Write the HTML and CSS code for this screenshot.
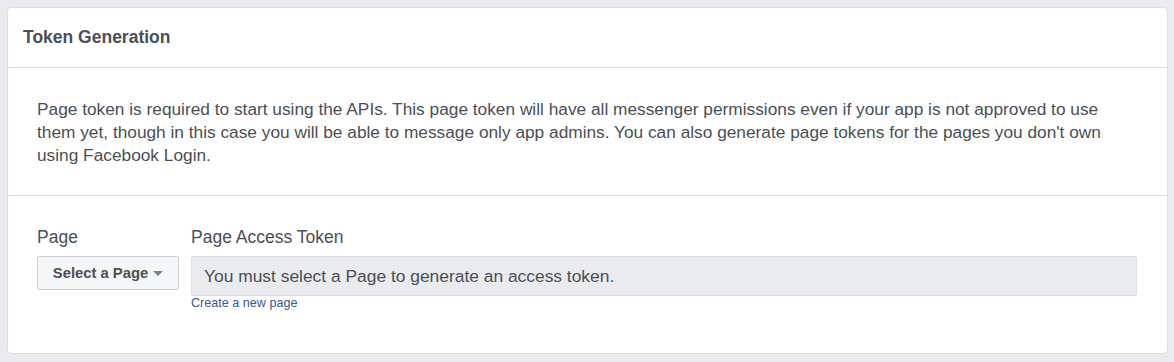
FILE: index.html
```html
<!DOCTYPE html>
<html lang="en">
<head>
    <meta charset="UTF-8">
    <title>Token Generation</title>
    <link rel="stylesheet" href="styles.css">
</head>
<body>
    <div class="card">
        <!-- Header -->
        <div class="card-header">Token Generation</div>

        <!-- Description -->
        <div class="card-section">
            <p class="description">Page token is required to start using the APIs. This page token will have all messenger permissions even if your app is not approved to use them yet, though in this case you will be able to message only app admins. You can also generate page tokens for the pages you don't own using Facebook Login.</p>
        </div>

        <!-- Token form -->
        <div class="card-section form-section">
            <div class="field page-field">
                <label>Page</label>
                <button class="select-button">Select a Page <span class="caret"></span></button>
            </div>
            <div class="field token-field">
                <label>Page Access Token</label>
                <div class="token-box">You must select a Page to generate an access token.</div>
                <a href="#" class="create-link">Create a new page</a>
            </div>
        </div>
    </div>
</body>
</html>
```

FILE: styles.css
```css
body {
    background-color: #e9ebee;
    font-family: 'Liberation Sans', Arial, sans-serif;
    margin: 0;
    padding: 7px 6px 8px 7px;
    color: #4b4f56;
}

.card {
    background-color: white;
    border: 1px solid #dddfe2;
    border-radius: 4px;
    height: 347px;
    box-sizing: border-box;
}

.card-header {
    height: 59px;
    padding-left: 15px;
    display: flex;
    align-items: center;
    font-size: 17.5px;
    font-weight: bold;
    color: #4b4f56;
    border-bottom: 1px solid #dddfe2;
}

.card-section {
    padding: 30px 29px 0 29px;
}

.description {
    font-size: 17.3px;
    line-height: 23px;
    padding: 0 29px 28px 29px;
    border-bottom: 1px solid #dddfe2;
    margin: 0 -29px;
}

.form-section {
    display: flex;
    gap: 12px;
    padding-top: 31px;
}

.field label {
    display: block;
    font-size: 17.5px;
    line-height: 20px;
    margin-bottom: 9px;
}

.page-field {
    width: 142px;
}

.token-field {
    flex: 1;
    padding-right: 1px;
}

.select-button {
    width: 142px;
    height: 34px;
    background-color: #f5f6f7;
    border: 1px solid #ccd0d5;
    border-radius: 2px;
    font-family: 'Liberation Sans', Arial, sans-serif;
    font-size: 14.8px;
    font-weight: bold;
    color: #4b4f56;
    display: flex;
    align-items: center;
    justify-content: center;
    gap: 5px;
    padding: 0;
}

.caret {
    width: 0;
    height: 0;
    border-left: 5px solid transparent;
    border-right: 5px solid transparent;
    border-top: 5px solid #7f8287;
    margin-top: 1px;
}

.token-box {
    height: 40px;
    box-sizing: border-box;
    background-color: #e9ebee;
    border: 1px solid #dddfe2;
    border-radius: 2px;
    padding-left: 12px;
    display: flex;
    align-items: center;
    font-size: 17.4px;
}

.create-link {
    display: block;
    font-size: 12.6px;
    line-height: 14px;
    color: #365899;
    text-decoration: none;
}
```
